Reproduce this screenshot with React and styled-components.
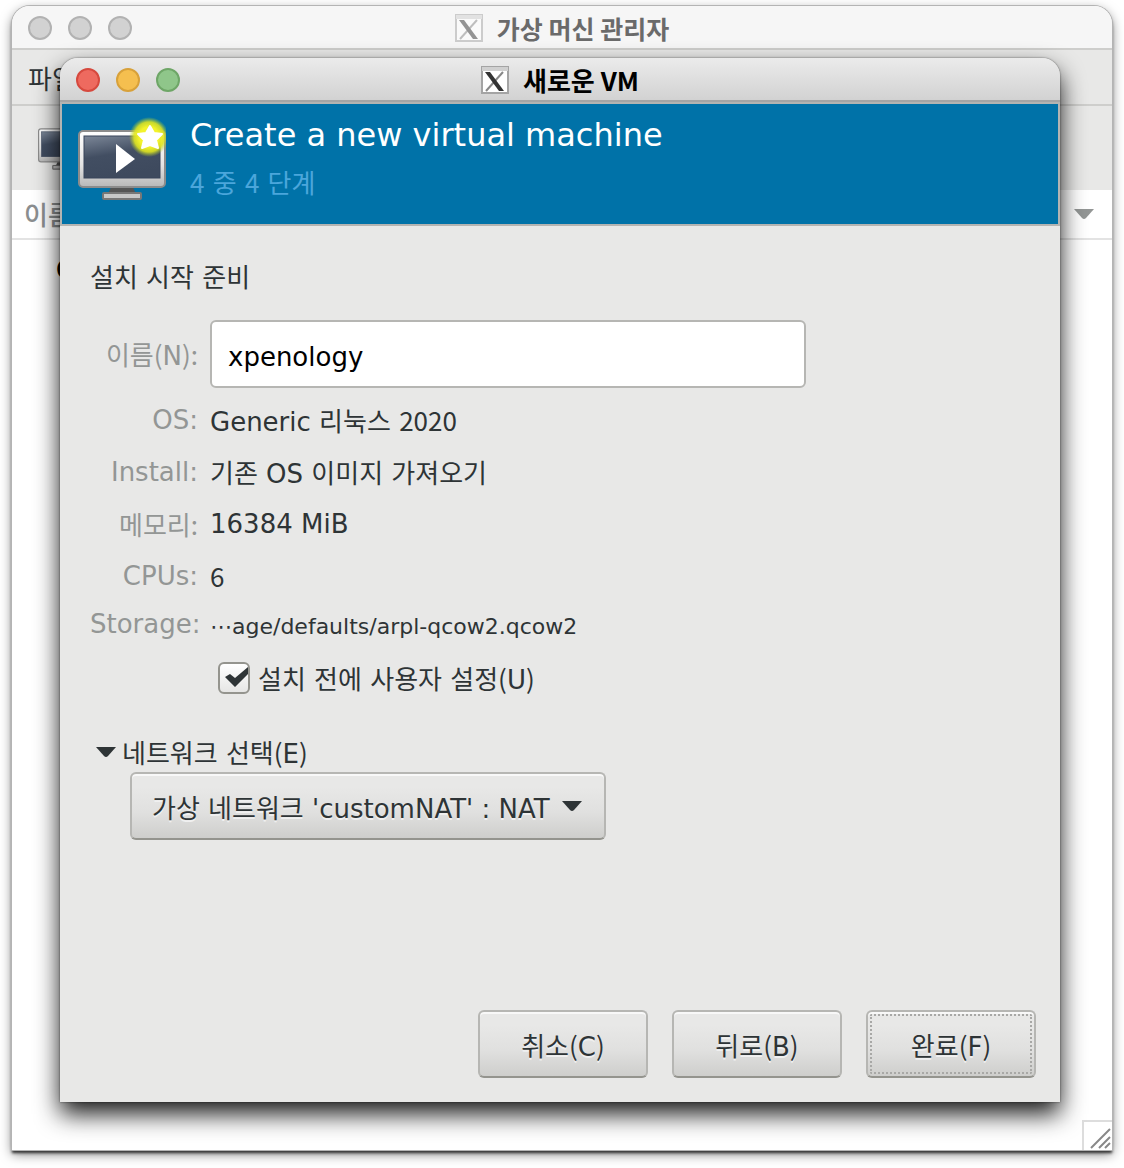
import styled, { createGlobalStyle } from "styled-components";

const KOREAN = `"Noto Sans CJK KR", "Noto Sans", sans-serif`;
const LATIN = `"DejaVu Sans", "Noto Sans CJK KR", sans-serif`;

const GlobalStyle = createGlobalStyle`
  * {
    box-sizing: border-box;
  }
  body {
    margin: 0;
    background: #fff;
    color: #2e3436;
    font-family: ${KOREAN};
    font-size: 26px;
    line-height: 40px;
  }
`;

const Desktop = styled.div`
  display: grid;
  min-height: 100vh;
  padding: 6px 12px 18px;
`;
const Window = styled.section`
  grid-area: 1 / 1;
  display: flex;
  flex-direction: column;
  min-width: 0;
  border-radius: 18px 18px 0 0;
`;
const ManagerWindow = styled(Window)`
  background: #fff;
  box-shadow: 0 0 0 1px #b4b4b4, 0 3px 3px #333, 0 4px 12px rgba(0, 0, 0, 0.5);
`;
const DialogWindow = styled(Window)`
  margin: 52px 52px 48px 48px;
  background: #e8e8e7;
  box-shadow: 0 0 2px rgba(0, 0, 0, 0.6), 0 12px 24px rgba(0, 0, 0, 0.9);
  z-index: 1;
`;

const TitleBar = styled.header`
  display: flex;
  align-items: center;
  height: 44px;
  padding: 2px 16px 0;
  border-bottom: 2px solid ${({ $active }) => ($active ? "#a5a5a5" : "#cececc")};
  border-radius: 18px 18px 0 0;
  background: ${({ $active }) =>
    $active ? "linear-gradient(#ebebeb, #d2d2d2)" : "#f6f6f6"};
  color: ${({ $active }) => ($active ? "#000" : "#6a6a6a")};
`;
const Lights = styled.div`
  display: flex;
  flex: 1;
  gap: 16px;
`;
const Light = styled.button`
  width: 24px;
  height: 24px;
  padding: 0;
  border: 2px solid ${({ $edge }) => $edge};
  border-radius: 50%;
  background: ${({ $fill }) => $fill};
`;
const Title = styled.h1`
  display: flex;
  align-items: center;
  gap: 14px;
  margin: 0;
  font-size: ${({ $active }) => ($active ? "26px" : "25px")};
  font-weight: 700;
  line-height: 38px;
`;
const Spacer = styled.div`
  flex: 1;
`;

const MenuBar = styled.nav`
  height: 56px;
  padding: 8px 16px;
  border-bottom: 2px solid #cececc;
  background: #e8e8e7;
`;
const MenuButton = styled.button`
  padding: 0;
  border: 0;
  background: none;
  color: inherit;
  font: inherit;
`;
const ToolBar = styled.div`
  display: flex;
  height: 84px;
  padding: 14px 26px;
  background: #e8e8e7;
`;
const ColumnHeader = styled.div`
  display: flex;
  align-items: center;
  justify-content: space-between;
  height: 50px;
  padding: 0 18px 0 12px;
  border-bottom: 2px solid #e3e3e3;
  color: #8b8e8f;
  font-weight: 500;
`;
const MachineList = styled.div`
  flex: 1;
  padding: 10px 44px;
  color: #000;
  font-family: ${LATIN};
  font-weight: 700;
`;
const Grip = styled.div`
  display: grid;
  place-items: end;
  align-self: flex-end;
  width: 30px;
  height: 30px;
  border-top: 2px solid #ddd;
  border-left: 2px solid #ddd;
`;

const Banner = styled.div`
  display: flex;
  gap: 24px;
  min-height: 124px;
  padding: 12px 16px 10px;
  border: 2px solid #b4b4b2;
  background: #0072a8;
`;
const BannerTitle = styled.h2`
  margin: 0;
  color: #fff;
  font: 400 32px/38px ${LATIN};
`;
const BannerStep = styled.p`
  margin: 8px 0 0;
  color: #4ba6db;
`;

const Form = styled.form`
  display: flex;
  flex: 1;
  flex-direction: column;
  padding: 30px 24px 24px 30px;
`;
const Heading = styled.p`
  margin: 0 0 24px;
`;
const Fields = styled.div`
  display: grid;
  grid-template-columns: 108px minmax(0, 1fr);
  align-items: center;
  gap: 12px;
`;
const Label = styled.label`
  color: #939695;
  text-align: right;
  white-space: nowrap;
`;
const Value = styled.output`
  font-size: ${({ $small }) => ($small ? "22px" : "26px")};
  line-height: ${({ $small }) => ($small ? "32px" : "40px")};
`;
// letters and word spaces in DejaVu, hangul falls through to Noto
const Latin = styled.span`
  font-family: ${LATIN};
  line-height: 1;
`;
const LatinLine = styled.span`
  display: block;
  font-family: ${LATIN};
  line-height: 30px;
`;
const NameInput = styled.input`
  width: 100%;
  max-width: 596px;
  height: 68px;
  padding: 6px 16px 0;
  border: 2px solid #b6b6b3;
  border-radius: 6px;
  background: #fff;
  color: #000;
  font: 26px ${LATIN};
`;
const CheckRow = styled.label`
  display: flex;
  align-items: center;
  gap: 8px;
  margin: 18px 0 0 128px;
`;
const CheckBox = styled.input`
  appearance: none;
  width: 32px;
  height: 32px;
  margin: 0;
  border: 2px solid #94948e;
  border-radius: 6px;
  background: linear-gradient(#fff, #e6e6e5);
`;
const CheckCell = styled.span`
  display: grid;

  > * {
    grid-area: 1 / 1;
    place-self: center;
  }
  > svg {
    pointer-events: none;
  }
  > input:not(:checked) + svg {
    visibility: hidden;
  }
`;
const Expander = styled.button`
  display: flex;
  align-items: center;
  align-self: flex-start;
  gap: 6px;
  margin: 34px 0 0;
  padding: 0 0 0 6px;
  border: 0;
  background: none;
  color: inherit;
  font: inherit;
`;
const raised = `
  height: 68px;
  border: 2px solid #b6b6b3;
  border-bottom-color: #94948e;
  border-radius: 6px;
  background: linear-gradient(#e8e8e7 20%, #e0e0df 60%, #cececc);
  box-shadow: inset 0 2px #f8f8f8;
  color: #2e3436;
  text-shadow: 0 2px #f0f0f0;
`;
const SelectBox = styled.div`
  display: grid;
  align-self: flex-start;
  margin-left: 40px;

  > * {
    grid-area: 1 / 1;
  }
  > svg {
    place-self: center end;
    margin-right: 24px;
    pointer-events: none;
  }
`;
const Select = styled.select`
  ${raised}
  appearance: none;
  width: 476px;
  padding: 6px 48px 0 20px;
  font: 26px ${LATIN};
`;
const Actions = styled.div`
  display: flex;
  justify-content: flex-end;
  gap: 24px;
  margin-top: auto;
`;
const Button = styled.button`
  ${raised}
  width: 170px;
  padding: 2px 0 0;
  font: 26px/40px ${KOREAN};
  outline: ${({ $focused }) => ($focused ? "2px dotted #a8a8a6" : "none")};
  outline-offset: -6px;
`;

function XLogo({ faded }) {
  return (
    <svg width="28" height="28" viewBox="0 0 28 28" opacity={faded ? 0.5 : 1}>
      <rect x="1" y="1" width="26" height="26" fill="#fff" stroke="#a4a4a4" strokeWidth="2" />
      <path d="M1 1h26v4H1z" fill="#d0d0d0" />
      <path d="M22 6 5 25" stroke="#888" strokeWidth="2" />
      <path d="M4 6h5l14 19h-5z" fill="#333" />
    </svg>
  );
}

function Arrow({ color = "#2e3436" }) {
  return (
    <svg width="20" height="12" viewBox="0 0 20 12">
      <path d="M0 1h20l-8 9q-2 2-4 0z" fill={color} />
    </svg>
  );
}

function Monitor({ size, star }) {
  return (
    <svg width={size} height={size} viewBox="0 0 88 88">
      <defs>
        <linearGradient id="frame" x2="0" y2="1">
          <stop stopColor="#fff" />
          <stop offset=".6" stopColor="#e4e4e4" />
          <stop offset="1" stopColor="#b8b8b8" />
        </linearGradient>
        <linearGradient id="screen" x2=".3" y2="1">
          <stop stopColor="#7c8798" />
          <stop offset=".5" stopColor="#424e62" />
          <stop offset="1" stopColor="#3e4a5e" />
        </linearGradient>
        <radialGradient id="glow">
          <stop offset=".5" stopColor="#f3f32b" />
          <stop offset=".75" stopColor="#dfe420" stopOpacity=".9" />
          <stop offset="1" stopColor="#a8cc30" stopOpacity="0" />
        </radialGradient>
      </defs>
      <path d="M33 71h22l3 7H30z" fill="#555" />
      <rect x="25" y="77" width="38" height="6" rx="1" fill="#c8c8c8" stroke="#777" strokeWidth="2" />
      <rect x="1" y="15" width="86" height="56" rx="4" fill="url(#frame)" stroke="#8c8c8c" strokeWidth="2" />
      <rect x="6" y="20" width="76" height="42" fill="url(#screen)" stroke="#39455a" strokeWidth="1" />
      <path d="M38 28v29l19-14z" fill="#fff" />
      {star && (
        <>
          <circle cx="71" cy="21" r="20" fill="url(#glow)" />
          <path
            d="m72 10 4 7 8 1-6 6 2 8-8-3-8 3 2-8-6-6 8-1z"
            fill="#fff"
            stroke="#fff"
            strokeWidth="2"
            strokeLinejoin="round"
          />
        </>
      )}
    </svg>
  );
}

const lights = [
  { name: "Close", fill: "#ee6a5f", edge: "#d6493e" },
  { name: "Minimize", fill: "#f5bf4f", edge: "#d8a13a" },
  { name: "Zoom", fill: "#8fc68a", edge: "#6ea667" },
];

function WindowTitle({ active, children }) {
  return (
    <TitleBar $active={active}>
      <Lights>
        {lights.map(({ name, fill, edge }) => (
          <Light
            key={name}
            type="button"
            aria-label={name}
            $fill={active ? fill : "#d2d2d2"}
            $edge={active ? edge : "#b2b2b2"}
          />
        ))}
      </Lights>
      <Title $active={active}>
        <XLogo faded={!active} />
        {children}
      </Title>
      <Spacer />
    </TitleBar>
  );
}

function Manager() {
  return (
    <ManagerWindow>
      <WindowTitle>가상 머신 관리자</WindowTitle>
      <MenuBar>
        <MenuButton type="button">파일</MenuButton>
      </MenuBar>
      <ToolBar>
        <Monitor size={52} />
      </ToolBar>
      <ColumnHeader>
        이름
        <Arrow color="#939695" />
      </ColumnHeader>
      <MachineList>Q</MachineList>
      <Grip>
        <svg width="24" height="24" viewBox="0 0 24 24" stroke="#888" strokeWidth="2">
          <path d="M3 22 22 3M11 22l11-11M17 22l5-5" />
        </svg>
      </Grip>
    </ManagerWindow>
  );
}

function NewMachineDialog() {
  return (
    <DialogWindow>
      <WindowTitle active>새로운 VM</WindowTitle>
      <Banner>
        <Monitor size={88} star />
        <div>
          <BannerTitle>Create a new virtual machine</BannerTitle>
          <BannerStep>
            4<Latin> 중 </Latin>4<Latin> 단계</Latin>
          </BannerStep>
        </div>
      </Banner>
      <Form onSubmit={(e) => e.preventDefault()}>
        <Heading>
          <Latin>설치 시작 준비</Latin>
        </Heading>
        <Fields>
          <Label htmlFor="name">
            이름(<Latin>N</Latin>):
          </Label>
          <NameInput id="name" defaultValue="xpenology" />
          <Label htmlFor="os">
            <LatinLine>OS:</LatinLine>
          </Label>
          <Value id="os">
            <Latin>Generic 리눅스 </Latin>2020
          </Value>
          <Label htmlFor="install">
            <LatinLine>Install:</LatinLine>
          </Label>
          <Value id="install">
            <Latin>기존 OS 이미지 가져오기</Latin>
          </Value>
          <Label htmlFor="memory">메모리:</Label>
          <Value id="memory">
            <LatinLine>16384 MiB</LatinLine>
          </Value>
          <Label htmlFor="cpus">
            <LatinLine>CPUs:</LatinLine>
          </Label>
          <Value id="cpus">6</Value>
          <Label htmlFor="storage">
            <LatinLine>Storage:</LatinLine>
          </Label>
          <Value id="storage" $small>
            <Latin>⋯age/defaults/arpl-qcow2.qcow2</Latin>
          </Value>
        </Fields>
        <CheckRow>
          <CheckCell>
            <CheckBox type="checkbox" defaultChecked />
            <svg width="28" height="22" viewBox="0 0 28 22">
              <path d="m5 10 5-3 5 4L28 0v7L15 20z" fill="#2e3436" />
            </svg>
          </CheckCell>
          <span>
            <Latin>설치 전에 사용자 설정</Latin>(<Latin>U</Latin>)
          </span>
        </CheckRow>
        <Expander type="button" aria-expanded="true">
          <Arrow />
          <span>
            <Latin>네트워크 선택</Latin>(<Latin>E</Latin>)
          </span>
        </Expander>
        <SelectBox>
          <Select aria-label="네트워크 선택">
            <option>가상 네트워크 'customNAT' : NAT</option>
          </Select>
          <Arrow />
        </SelectBox>
        <Actions>
          <Button type="button">
            취소(<Latin>C</Latin>)
          </Button>
          <Button type="button">
            뒤로(<Latin>B</Latin>)
          </Button>
          <Button type="submit" $focused>
            완료(<Latin>F</Latin>)
          </Button>
        </Actions>
      </Form>
    </DialogWindow>
  );
}

function App() {
  return (
    <>
      <GlobalStyle />
      <Desktop>
        <Manager />
        <NewMachineDialog />
      </Desktop>
    </>
  );
}

export default App;
